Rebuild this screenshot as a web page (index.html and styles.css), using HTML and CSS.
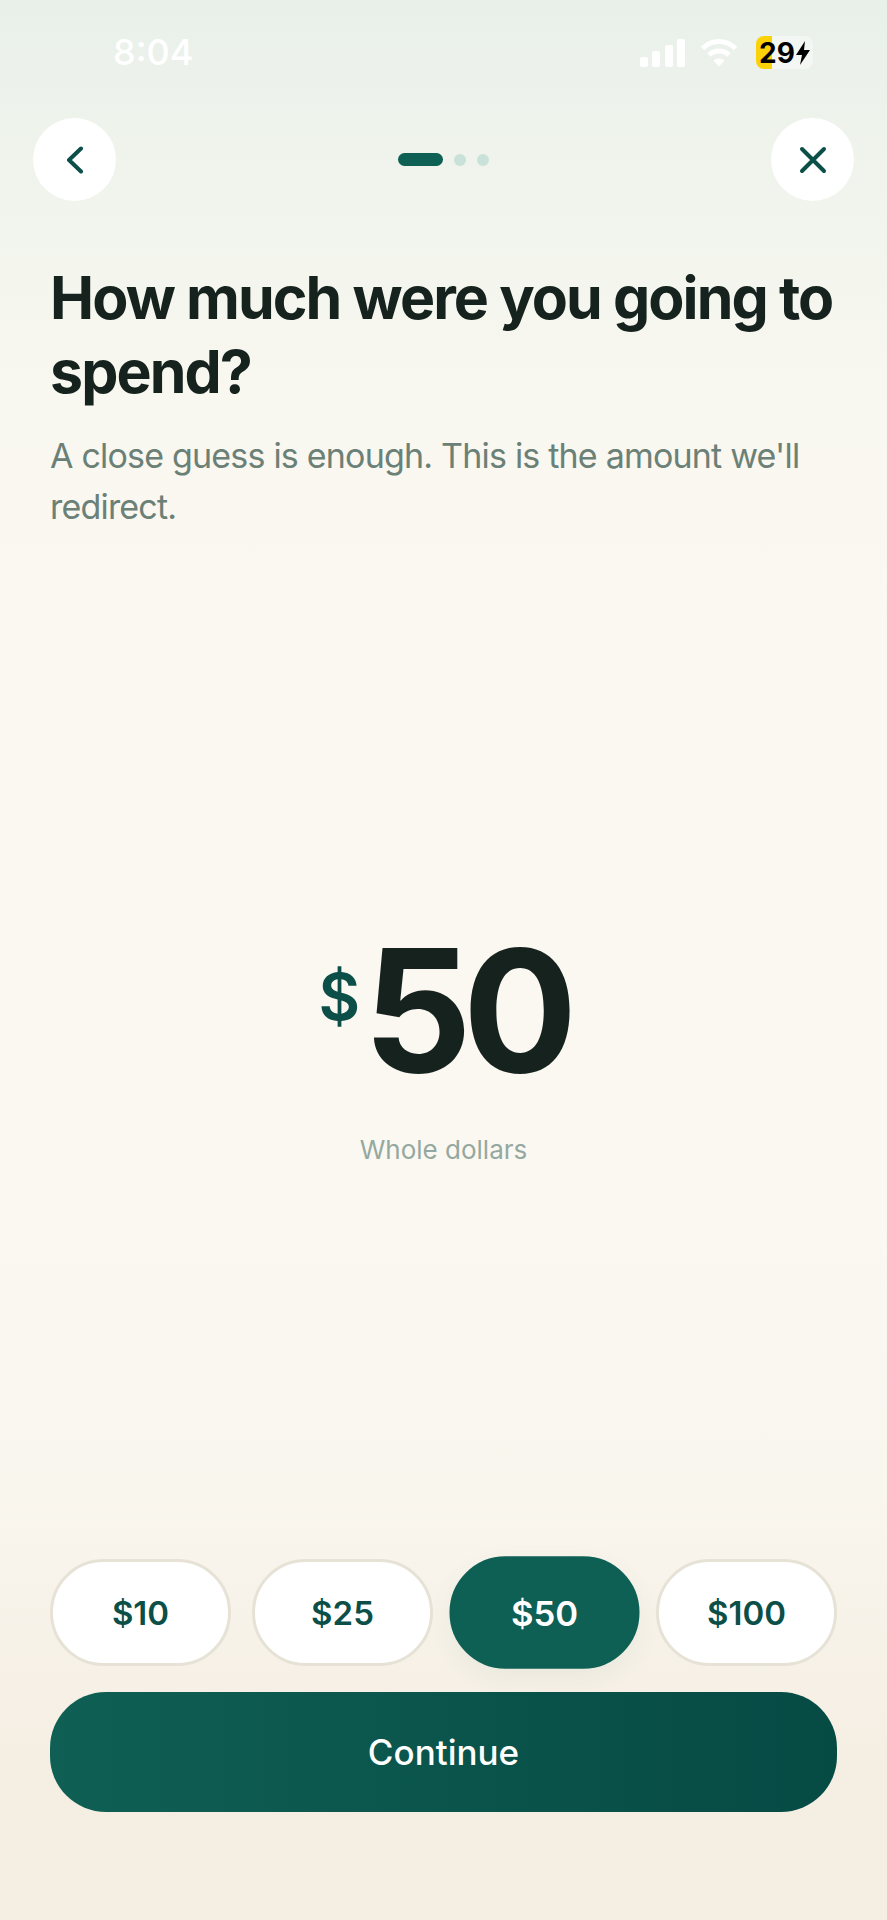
FILE: index.html
```html
<!DOCTYPE html>
<html lang="en">
<head>
    <meta charset="UTF-8">
    <title>How much were you going to spend?</title>
    <meta name="viewport" content="width=device-width, initial-scale=1.0">
    <link rel="stylesheet" href="styles.css">
</head>
<body>
    <div class="status-bar">
        <div class="status-time">8:04</div>
        <div class="status-icons">
            <svg class="signal-icon" viewBox="0 0 45 28" width="45" height="28" fill="#fff">
                <rect x="0" y="18" width="8" height="10" rx="2"/>
                <rect x="12" y="12" width="8" height="16" rx="2"/>
                <rect x="25" y="6" width="8" height="22" rx="2"/>
                <rect x="37" y="0" width="8" height="28" rx="2"/>
            </svg>
            <svg class="wifi-icon" viewBox="0 0 38 29" width="38" height="29" fill="none" stroke="#fff" stroke-width="5">
                <path d="M2.5 10.5C11.5 1 26.5 1 35.500 10.500"/>
                <path d="M9 17C14.500 11.800 23.500 11.800 29 17"/>
                <path d="M19 28.500L13.500 22.500C16.500 19.800 21.500 19.800 24.500 22.500Z" fill="#fff" stroke="none"/>
            </svg>
            <div class="battery">
                <span>29</span>
                <svg viewBox="0 0 14 24" width="14" height="24" fill="#000">
                    <path d="M9 0L0 14H6L4 24L14 9H8Z"/>
                </svg>
            </div>
        </div>
    </div>

    <div class="nav-row">
        <button class="round-btn" aria-label="Back">
            <svg viewBox="0 0 18 28" width="18" height="28" fill="none" stroke="#0b4f48" stroke-width="4" stroke-linecap="round" stroke-linejoin="round">
                <path d="M15 2.500L3 14L15 25.500"/>
            </svg>
        </button>
        <div class="progress">
            <div class="progress-bar"></div>
            <div class="progress-dot"></div>
            <div class="progress-dot"></div>
        </div>
        <button class="round-btn" aria-label="Close">
            <svg viewBox="0 0 28 28" width="28" height="28" fill="none" stroke="#0b4f48" stroke-width="4" stroke-linecap="round">
                <path d="M3 3L25 25M25 3L3 25"/>
            </svg>
        </button>
    </div>

    <div class="intro">
        <h1>How much were you going to spend?</h1>
        <p>A close guess is enough. This is the amount we'll redirect.</p>
    </div>

    <div class="amount-block">
        <div class="amount">
            <span class="amount-sign">$</span>
            <span class="amount-value">50</span>
        </div>
        <div class="amount-note">Whole dollars</div>
    </div>

    <div class="chips">
        <button class="chip">$10</button>
        <button class="chip">$25</button>
        <button class="chip chip-active">$50</button>
        <button class="chip">$100</button>
    </div>

    <button class="continue-btn">Continue</button>
</body>
</html>
```

FILE: styles.css
```css
* {
    box-sizing: border-box;
}

html, body {
    height: 100%;
}

body {
    margin: 0;
    height: 1920px;
    padding: 0 50px 108px;
    display: flex;
    flex-direction: column;
    overflow: hidden;
    font-family: Inter, "Liberation Sans", sans-serif;
    color: #15221e;
    background: linear-gradient(180deg, #e9f0ea 0%, #f2f5ed 12%, #f8f7f0 20%, #fbf8f1 32%, #fbf8f2 64%, #f9f6ee 78%, #f5eee3 92%, #f5eee3 100%);
}

button {
    font-family: inherit;
    border: none;
    cursor: pointer;
}

.status-bar {
    height: 104px;
    margin: 0 -50px;
    padding: 32px 74px 0 113px;
    display: flex;
    justify-content: space-between;
    align-items: flex-start;
}

.status-time {
    font-size: 36px;
    font-weight: 500;
    line-height: 40px;
    color: #fff;
}

.status-icons {
    display: flex;
    align-items: center;
    gap: 15px;
    margin-top: 4px;
}

.wifi-icon {
    margin-right: 3px;
}

.battery {
    width: 57px;
    height: 33px;
    display: flex;
    align-items: center;
    justify-content: center;
    gap: 1px;
    border-radius: 8px;
    font-size: 28px;
    font-weight: 700;
    color: #000;
    background: linear-gradient(90deg, #fbd208 28%, rgba(255, 255, 255, 0.4) 28%);
}

.nav-row {
    margin: 14px -17px 0;
    display: flex;
    justify-content: space-between;
    align-items: center;
}

.round-btn {
    width: 83px;
    height: 83px;
    padding: 0;
    border-radius: 50%;
    background: #fff;
    display: flex;
    align-items: center;
    justify-content: center;
}

.progress {
    display: flex;
    align-items: center;
    gap: 11px;
}

.progress-bar {
    width: 45px;
    height: 13px;
    border-radius: 7px;
    background: #0e5f54;
}

.progress-dot {
    width: 12px;
    height: 12px;
    border-radius: 50%;
    background: #c9e2d9;
}

.intro {
    margin-top: 60px;
}

h1 {
    margin: 0;
    font-size: 59px;
    line-height: 74px;
    font-weight: 700;
    letter-spacing: -1.9px;
    color: #15221e;
}

.intro p {
    margin: 21px 0 0;
    font-size: 34px;
    line-height: 51px;
    letter-spacing: -0.8px;
    color: #6b8076;
}

.amount-block {
    flex: 1;
    display: flex;
    flex-direction: column;
    align-items: center;
    padding-top: 393px;
}

.amount {
    display: flex;
    align-items: flex-start;
    gap: 3px;
}

.amount-sign {
    font-size: 64px;
    font-weight: 600;
    line-height: 76px;
    margin-top: 34px;
    color: #0b4f48;
}

.amount-value {
    font-size: 170px;
    font-weight: 700;
    line-height: 170px;
    letter-spacing: -9px;
    color: #15221e;
}

.amount-note {
    margin-top: 39px;
    font-size: 26px;
    line-height: 32px;
    color: #94a8a0;
}

.chips {
    display: grid;
    grid-template-columns: repeat(4, 1fr);
    gap: 21px;
    margin-bottom: 26px;
}

.chip {
    height: 107px;
    border: 3px solid #e6e2d6;
    border-radius: 54px;
    background: #fff;
    font-size: 33px;
    font-weight: 600;
    color: #0b4f48;
}

.chip-active {
    border-color: #0e5f54;
    background: #0e5f54;
    color: #fff;
    transform: scale(1.05);
    box-shadow: 0 8px 24px rgba(14, 95, 84, 0.06);
}

.continue-btn {
    height: 120px;
    flex-shrink: 0;
    border-radius: 56px;
    background: linear-gradient(90deg, #0f5f54, #064a44);
    font-size: 35px;
    font-weight: 500;
    color: #fff;
}
```
